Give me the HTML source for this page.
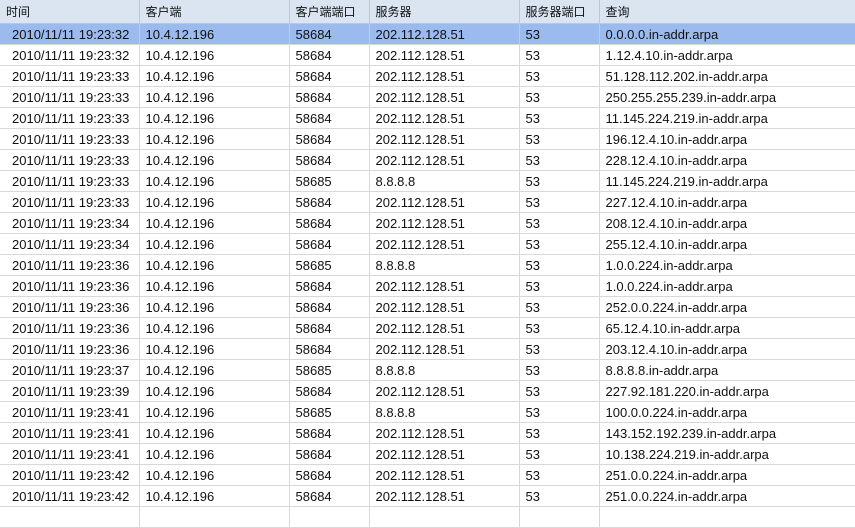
<!DOCTYPE html>
<html><head><meta charset="utf-8"><style>
body{margin:0;width:855px;height:512px;overflow:hidden;background:#fff;font-family:"Liberation Sans","Noto Sans CJK SC",sans-serif;font-size:13px;color:#111;}
table{border-collapse:collapse;table-layout:fixed;width:855px;}
td,th{padding:0 0 0 6px;white-space:nowrap;overflow:hidden;text-align:left;font-weight:normal;}
th{height:23px;background:#dae5f1;border-right:1px solid #b9c9da;border-bottom:1px solid #b9c9da;font-size:12px;}
td{height:20px;border-right:1px solid #d8d8d8;border-bottom:1px solid #d8d8d8;}
td:first-child{padding-left:12px}
tr.sel td{background:#9bbbee;border-right-color:#b8cdee;}
th:last-child,td:last-child{border-right:none}
</style></head><body>
<table>
<colgroup><col style="width:139px"><col style="width:150px"><col style="width:80px"><col style="width:150px"><col style="width:80px"><col></colgroup>
<tr><th>时间</th><th>客户端</th><th>客户端端口</th><th>服务器</th><th>服务器端口</th><th>查询</th></tr>
<tr class="sel"><td>2010/11/11 19:23:32</td><td>10.4.12.196</td><td>58684</td><td>202.112.128.51</td><td>53</td><td>0.0.0.0.in-addr.arpa</td></tr>
<tr><td>2010/11/11 19:23:32</td><td>10.4.12.196</td><td>58684</td><td>202.112.128.51</td><td>53</td><td>1.12.4.10.in-addr.arpa</td></tr>
<tr><td>2010/11/11 19:23:33</td><td>10.4.12.196</td><td>58684</td><td>202.112.128.51</td><td>53</td><td>51.128.112.202.in-addr.arpa</td></tr>
<tr><td>2010/11/11 19:23:33</td><td>10.4.12.196</td><td>58684</td><td>202.112.128.51</td><td>53</td><td>250.255.255.239.in-addr.arpa</td></tr>
<tr><td>2010/11/11 19:23:33</td><td>10.4.12.196</td><td>58684</td><td>202.112.128.51</td><td>53</td><td>11.145.224.219.in-addr.arpa</td></tr>
<tr><td>2010/11/11 19:23:33</td><td>10.4.12.196</td><td>58684</td><td>202.112.128.51</td><td>53</td><td>196.12.4.10.in-addr.arpa</td></tr>
<tr><td>2010/11/11 19:23:33</td><td>10.4.12.196</td><td>58684</td><td>202.112.128.51</td><td>53</td><td>228.12.4.10.in-addr.arpa</td></tr>
<tr><td>2010/11/11 19:23:33</td><td>10.4.12.196</td><td>58685</td><td>8.8.8.8</td><td>53</td><td>11.145.224.219.in-addr.arpa</td></tr>
<tr><td>2010/11/11 19:23:33</td><td>10.4.12.196</td><td>58684</td><td>202.112.128.51</td><td>53</td><td>227.12.4.10.in-addr.arpa</td></tr>
<tr><td>2010/11/11 19:23:34</td><td>10.4.12.196</td><td>58684</td><td>202.112.128.51</td><td>53</td><td>208.12.4.10.in-addr.arpa</td></tr>
<tr><td>2010/11/11 19:23:34</td><td>10.4.12.196</td><td>58684</td><td>202.112.128.51</td><td>53</td><td>255.12.4.10.in-addr.arpa</td></tr>
<tr><td>2010/11/11 19:23:36</td><td>10.4.12.196</td><td>58685</td><td>8.8.8.8</td><td>53</td><td>1.0.0.224.in-addr.arpa</td></tr>
<tr><td>2010/11/11 19:23:36</td><td>10.4.12.196</td><td>58684</td><td>202.112.128.51</td><td>53</td><td>1.0.0.224.in-addr.arpa</td></tr>
<tr><td>2010/11/11 19:23:36</td><td>10.4.12.196</td><td>58684</td><td>202.112.128.51</td><td>53</td><td>252.0.0.224.in-addr.arpa</td></tr>
<tr><td>2010/11/11 19:23:36</td><td>10.4.12.196</td><td>58684</td><td>202.112.128.51</td><td>53</td><td>65.12.4.10.in-addr.arpa</td></tr>
<tr><td>2010/11/11 19:23:36</td><td>10.4.12.196</td><td>58684</td><td>202.112.128.51</td><td>53</td><td>203.12.4.10.in-addr.arpa</td></tr>
<tr><td>2010/11/11 19:23:37</td><td>10.4.12.196</td><td>58685</td><td>8.8.8.8</td><td>53</td><td>8.8.8.8.in-addr.arpa</td></tr>
<tr><td>2010/11/11 19:23:39</td><td>10.4.12.196</td><td>58684</td><td>202.112.128.51</td><td>53</td><td>227.92.181.220.in-addr.arpa</td></tr>
<tr><td>2010/11/11 19:23:41</td><td>10.4.12.196</td><td>58685</td><td>8.8.8.8</td><td>53</td><td>100.0.0.224.in-addr.arpa</td></tr>
<tr><td>2010/11/11 19:23:41</td><td>10.4.12.196</td><td>58684</td><td>202.112.128.51</td><td>53</td><td>143.152.192.239.in-addr.arpa</td></tr>
<tr><td>2010/11/11 19:23:41</td><td>10.4.12.196</td><td>58684</td><td>202.112.128.51</td><td>53</td><td>10.138.224.219.in-addr.arpa</td></tr>
<tr><td>2010/11/11 19:23:42</td><td>10.4.12.196</td><td>58684</td><td>202.112.128.51</td><td>53</td><td>251.0.0.224.in-addr.arpa</td></tr>
<tr><td>2010/11/11 19:23:42</td><td>10.4.12.196</td><td>58684</td><td>202.112.128.51</td><td>53</td><td>251.0.0.224.in-addr.arpa</td></tr>
<tr><td>&nbsp;</td><td></td><td></td><td></td><td></td><td></td></tr>
</table>
</body></html>
